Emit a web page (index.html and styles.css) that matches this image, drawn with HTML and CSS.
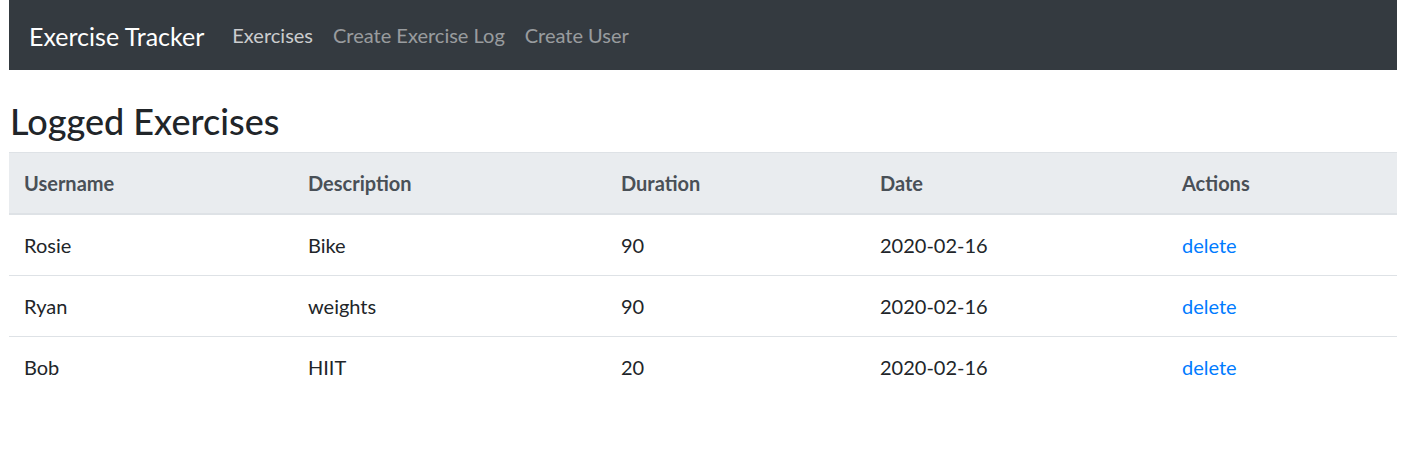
FILE: index.html
```html
<!DOCTYPE html>
<html lang="en">
<head>
<meta charset="utf-8">
<title>Exercise Tracker</title>
<link rel="stylesheet" href="styles.css">
</head>
<body>
<div class="page">
  <nav class="navbar">
    <a class="brand" href="#">Exercise Tracker</a>
    <ul class="nav">
      <li><a class="nav-link active" href="#">Exercises</a></li>
      <li><a class="nav-link" href="#">Create Exercise Log</a></li>
      <li><a class="nav-link" href="#">Create User</a></li>
    </ul>
  </nav>
  <main class="content">
    <h3 class="title">Logged Exercises</h3>
    <table class="table">
      <colgroup>
        <col class="c1"><col class="c2"><col class="c3"><col class="c4"><col class="c5">
      </colgroup>
      <thead>
        <tr><th>Username</th><th>Description</th><th>Duration</th><th>Date</th><th>Actions</th></tr>
      </thead>
      <tbody>
        <tr><td>Rosie</td><td>Bike</td><td>90</td><td>2020-02-16</td><td><a class="del" href="#">delete</a></td></tr>
        <tr><td>Ryan</td><td>weights</td><td>90</td><td>2020-02-16</td><td><a class="del" href="#">delete</a></td></tr>
        <tr><td>Bob</td><td>HIIT</td><td>20</td><td>2020-02-16</td><td><a class="del" href="#">delete</a></td></tr>
      </tbody>
    </table>
  </main>
</div>
</body>
</html>
```
FILE: styles.css
```css
* { box-sizing: border-box; }
html, body { margin: 0; padding: 0; background: #fff; }
body {
  font-family: Lato, "Noto Sans", sans-serif;
  font-size: 20px;
  line-height: 30px;
  color: #212529;
}
.page {
  width: 1388px;
  margin-left: 9px;
}
.navbar {
  display: flex;
  align-items: center;
  height: 70px;
  padding: 0 20px;
  background: #343a40;
}
.brand {
  font-size: 25px;
  line-height: 37.5px;
  color: #fff;
  text-decoration: none;
  margin-right: 18px;
  padding-top: 3px;
}
.nav {
  display: flex;
  list-style: none;
  margin: 0;
  padding: 0;
}
.nav-link {
  display: block;
  padding: 10px 10px;
  color: rgba(255,255,255,0.5);
  text-decoration: none;
}
.nav-link.active { color: rgba(255,255,255,0.75); }
.content { padding-top: 30px; }
.title {
  margin: 0 0 10px 1px;
  font-size: 36px;
  font-weight: 500;
  line-height: 42px;
}
.table {
  width: 100%;
  border-collapse: collapse;
  table-layout: fixed;
}
.c1 { width: 284px; }
.c2 { width: 313px; }
.c3 { width: 259px; }
.c4 { width: 302px; }
.c5 { width: 230px; }
.table th, .table td {
  padding: 15px 15px;
  text-align: left;
  vertical-align: top;
}
.table th {
  background: #e9ecef;
  color: #495057;
  font-weight: 700;
  border-top: 1px solid #dee2e6;
  border-bottom: 2px solid #dee2e6;
}
.table td { border-top: 1px solid #dee2e6; }
.table tbody tr:first-child td { border-top: 0; }
.del { color: #007bff; text-decoration: none; }
```
